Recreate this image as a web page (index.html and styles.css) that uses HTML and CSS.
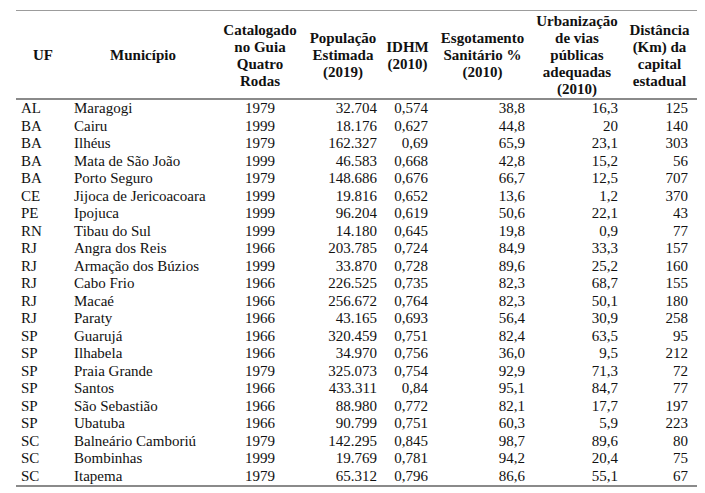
FILE: index.html
```html
<!DOCTYPE html>
<html lang="pt">
<head>
<meta charset="utf-8">
<title>Municípios turísticos</title>
<link rel="stylesheet" href="styles.css">
</head>
<body>
<table class="data">
  <colgroup>
    <col class="w-uf"><col class="w-mun"><col class="w-cat"><col class="w-pop">
    <col class="w-idh"><col class="w-esg"><col class="w-urb"><col class="w-dist">
  </colgroup>
  <thead>
    <tr>
      <th>UF</th>
      <th>Município</th>
      <th>Catalogado<br>no Guia<br>Quatro<br>Rodas</th>
      <th>População<br>Estimada<br>(2019)</th>
      <th>IDHM<br>(2010)</th>
      <th>Esgotamento<br>Sanitário %<br>(2010)</th>
      <th>Urbanização<br>de vias<br>públicas<br>adequadas<br>(2010)</th>
      <th>Distância<br>(Km) da<br>capital<br>estadual</th>
    </tr>
  </thead>
  <tbody>
    <tr><td class="uf">AL</td><td class="mun">Maragogi</td><td class="cat">1979</td><td class="pop">32.704</td><td class="idh">0,574</td><td class="esg">38,8</td><td class="urb">16,3</td><td class="dist">125</td></tr>
    <tr><td class="uf">BA</td><td class="mun">Cairu</td><td class="cat">1999</td><td class="pop">18.176</td><td class="idh">0,627</td><td class="esg">44,8</td><td class="urb">20</td><td class="dist">140</td></tr>
    <tr><td class="uf">BA</td><td class="mun">Ilhéus</td><td class="cat">1979</td><td class="pop">162.327</td><td class="idh">0,69</td><td class="esg">65,9</td><td class="urb">23,1</td><td class="dist">303</td></tr>
    <tr><td class="uf">BA</td><td class="mun">Mata de São João</td><td class="cat">1999</td><td class="pop">46.583</td><td class="idh">0,668</td><td class="esg">42,8</td><td class="urb">15,2</td><td class="dist">56</td></tr>
    <tr><td class="uf">BA</td><td class="mun">Porto Seguro</td><td class="cat">1979</td><td class="pop">148.686</td><td class="idh">0,676</td><td class="esg">66,7</td><td class="urb">12,5</td><td class="dist">707</td></tr>
    <tr><td class="uf">CE</td><td class="mun">Jijoca de Jericoacoara</td><td class="cat">1999</td><td class="pop">19.816</td><td class="idh">0,652</td><td class="esg">13,6</td><td class="urb">1,2</td><td class="dist">370</td></tr>
    <tr><td class="uf">PE</td><td class="mun">Ipojuca</td><td class="cat">1999</td><td class="pop">96.204</td><td class="idh">0,619</td><td class="esg">50,6</td><td class="urb">22,1</td><td class="dist">43</td></tr>
    <tr><td class="uf">RN</td><td class="mun">Tibau do Sul</td><td class="cat">1999</td><td class="pop">14.180</td><td class="idh">0,645</td><td class="esg">19,8</td><td class="urb">0,9</td><td class="dist">77</td></tr>
    <tr><td class="uf">RJ</td><td class="mun">Angra dos Reis</td><td class="cat">1966</td><td class="pop">203.785</td><td class="idh">0,724</td><td class="esg">84,9</td><td class="urb">33,3</td><td class="dist">157</td></tr>
    <tr><td class="uf">RJ</td><td class="mun">Armação dos Búzios</td><td class="cat">1999</td><td class="pop">33.870</td><td class="idh">0,728</td><td class="esg">89,6</td><td class="urb">25,2</td><td class="dist">160</td></tr>
    <tr><td class="uf">RJ</td><td class="mun">Cabo Frio</td><td class="cat">1966</td><td class="pop">226.525</td><td class="idh">0,735</td><td class="esg">82,3</td><td class="urb">68,7</td><td class="dist">155</td></tr>
    <tr><td class="uf">RJ</td><td class="mun">Macaé</td><td class="cat">1966</td><td class="pop">256.672</td><td class="idh">0,764</td><td class="esg">82,3</td><td class="urb">50,1</td><td class="dist">180</td></tr>
    <tr><td class="uf">RJ</td><td class="mun">Paraty</td><td class="cat">1966</td><td class="pop">43.165</td><td class="idh">0,693</td><td class="esg">56,4</td><td class="urb">30,9</td><td class="dist">258</td></tr>
    <tr><td class="uf">SP</td><td class="mun">Guarujá</td><td class="cat">1966</td><td class="pop">320.459</td><td class="idh">0,751</td><td class="esg">82,4</td><td class="urb">63,5</td><td class="dist">95</td></tr>
    <tr><td class="uf">SP</td><td class="mun">Ilhabela</td><td class="cat">1966</td><td class="pop">34.970</td><td class="idh">0,756</td><td class="esg">36,0</td><td class="urb">9,5</td><td class="dist">212</td></tr>
    <tr><td class="uf">SP</td><td class="mun">Praia Grande</td><td class="cat">1979</td><td class="pop">325.073</td><td class="idh">0,754</td><td class="esg">92,9</td><td class="urb">71,3</td><td class="dist">72</td></tr>
    <tr><td class="uf">SP</td><td class="mun">Santos</td><td class="cat">1966</td><td class="pop">433.311</td><td class="idh">0,84</td><td class="esg">95,1</td><td class="urb">84,7</td><td class="dist">77</td></tr>
    <tr><td class="uf">SP</td><td class="mun">São Sebastião</td><td class="cat">1966</td><td class="pop">88.980</td><td class="idh">0,772</td><td class="esg">82,1</td><td class="urb">17,7</td><td class="dist">197</td></tr>
    <tr><td class="uf">SP</td><td class="mun">Ubatuba</td><td class="cat">1966</td><td class="pop">90.799</td><td class="idh">0,751</td><td class="esg">60,3</td><td class="urb">5,9</td><td class="dist">223</td></tr>
    <tr><td class="uf">SC</td><td class="mun">Balneário Camboriú</td><td class="cat">1979</td><td class="pop">142.295</td><td class="idh">0,845</td><td class="esg">98,7</td><td class="urb">89,6</td><td class="dist">80</td></tr>
    <tr><td class="uf">SC</td><td class="mun">Bombinhas</td><td class="cat">1999</td><td class="pop">19.769</td><td class="idh">0,781</td><td class="esg">94,2</td><td class="urb">20,4</td><td class="dist">75</td></tr>
    <tr><td class="uf">SC</td><td class="mun">Itapema</td><td class="cat">1979</td><td class="pop">65.312</td><td class="idh">0,796</td><td class="esg">86,6</td><td class="urb">55,1</td><td class="dist">67</td></tr>
  </tbody>
</table>
</body>
</html>
```

FILE: styles.css
```css
html, body {
  margin: 0;
  padding: 0;
  background: #ffffff;
}

body {
  font-family: "Liberation Serif", Tinos, "Times New Roman", serif;
  font-size: 15px;
  color: #111111;
}

.data {
  font-family: "Liberation Serif", Tinos, "Times New Roman", serif;
  margin: 10px 0 0 16px;
  width: 681px;
  table-layout: fixed;
  border-collapse: separate;
  border-spacing: 0;
}

.w-uf { width: 54px; }
.w-mun { width: 146px; }
.w-cat { width: 88px; }
.w-pop { width: 78px; }
.w-idh { width: 51px; }
.w-esg { width: 99px; }
.w-urb { width: 90px; }
.w-dist { width: 75px; }

.data th {
  font-weight: bold;
  text-align: center;
  vertical-align: middle;
  line-height: 17px;
  padding: 2px 0 0 0;
  border-top: 1px solid #9c9c9c;
  border-bottom: 2px solid #8a8a8a;
  white-space: nowrap;
}

.data td {
  line-height: 17.5px;
  height: 17.5px;
  padding: 0;
  white-space: nowrap;
  vertical-align: middle;
}

.data tbody tr:last-child td {
  border-bottom: 2px solid #8a8a8a;
}

.data .uf { text-align: left; padding-left: 5px; }
.data .mun { text-align: left; padding-left: 4px; }
.data .cat { text-align: center; }
.data .pop { text-align: right; padding-right: 5px; }
.data .idh { text-align: right; padding-right: 5px; }
.data .esg { text-align: right; padding-right: 7px; }
.data .urb { text-align: right; padding-right: 4px; }
.data .dist { text-align: right; padding-right: 9px; }
```
